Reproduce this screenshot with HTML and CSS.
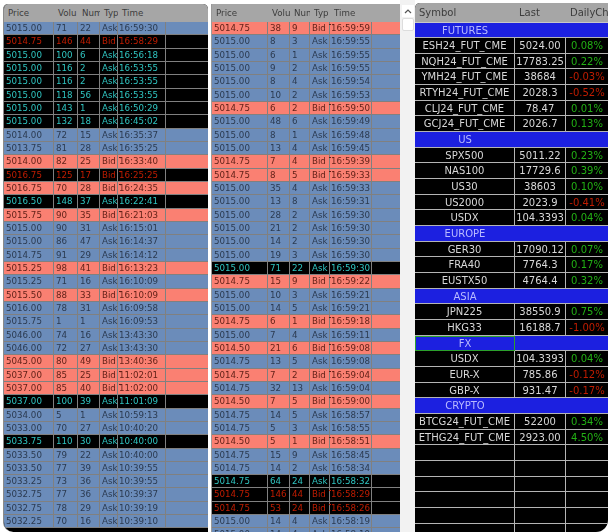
FILE: index.html
```html
<!DOCTYPE html>
<html lang="en">
<head>
    <meta charset="UTF-8">
    <meta name="viewport" content="width=device-width, initial-scale=1.0">
    <title>Time and Sales</title>
    <link rel="stylesheet" href="styles.css">
</head>
<body>
    <div class="desk">
        <div class="tape tape-left" id="tapeLeft">
            <div class="tape-head"><span>Price</span><span>Volu</span><span>Num</span><span>Typ</span><span>Time</span><span></span></div>
        </div>
        <div class="tape tape-mid" id="tapeMid">
            <div class="tape-head"><span>Price</span><span>Volu</span><span>Num</span><span>Typ</span><span>Time</span><span></span></div>
        </div>
        <div class="scrollbar">
            <div class="scroll-btn">
                <svg width="8" height="5" viewBox="0 0 8 5"><path d="M1 4 L4 1 L7 4" fill="none" stroke="#555" stroke-width="1.2"/></svg>
            </div>
            <div class="scroll-thumb"></div>
        </div>
        <div class="quotes" id="quotes">
            <div class="quotes-head"><span>Symbol</span><span>Last</span><span>DailyCh</span></div>
        </div>
    </div>
    <script>
        // k = ask, b = bid, K / B = the black highlighted prints
        const leftRows = [
            "5015.00 71 22 k 16:59:30", "5014.75 146 44 B 16:58:29", "5015.00 100 6 K 16:56:18",
            "5015.00 116 2 K 16:53:55", "5015.00 116 2 K 16:53:55", "5015.00 118 56 K 16:53:55",
            "5015.00 143 1 K 16:50:29", "5015.00 132 18 K 16:45:02", "5014.00 72 15 k 16:35:37",
            "5013.75 81 28 k 16:35:25", "5014.00 82 25 b 16:33:40", "5016.75 125 17 B 16:25:25",
            "5016.75 70 28 b 16:24:35", "5016.50 148 37 K 16:22:41", "5015.75 90 35 b 16:21:03",
            "5015.00 90 31 k 16:15:01", "5015.00 86 47 k 16:14:37", "5014.75 91 29 k 16:14:12",
            "5015.25 98 41 b 16:13:23", "5015.25 71 16 k 16:10:09", "5015.50 88 33 b 16:10:09",
            "5016.00 78 31 k 16:09:58", "5015.75 1 1 k 16:09:53", "5046.00 74 16 k 13:43:30",
            "5046.00 72 27 k 13:43:30", "5045.00 80 49 b 13:40:36", "5037.00 85 25 b 11:02:01",
            "5037.00 85 40 b 11:02:00", "5037.00 100 39 K 11:01:09", "5034.00 5 1 k 10:59:13",
            "5033.00 70 27 k 10:40:20", "5033.75 110 30 K 10:40:00", "5033.50 79 22 k 10:40:00",
            "5033.50 77 39 k 10:39:55", "5033.25 73 36 k 10:39:55", "5032.75 77 36 k 10:39:37",
            "5032.75 78 29 k 10:39:19", "5032.25 70 16 k 10:39:10"
        ];
        const midRows = [
            "5014.75 38 9 b 16:59:59", "5015.00 8 3 k 16:59:55", "5015.00 6 1 k 16:59:55",
            "5015.00 9 2 k 16:59:55", "5015.00 8 4 k 16:59:54", "5015.00 10 2 k 16:59:53",
            "5014.75 6 2 b 16:59:50", "5015.00 48 6 k 16:59:49", "5015.00 8 1 k 16:59:48",
            "5015.00 13 4 k 16:59:45", "5014.75 7 4 b 16:59:39", "5014.75 8 5 b 16:59:33",
            "5015.00 35 4 k 16:59:33", "5015.00 13 8 k 16:59:31", "5015.00 28 2 k 16:59:30",
            "5015.00 21 2 k 16:59:30", "5015.00 14 2 k 16:59:30", "5015.00 19 3 k 16:59:30",
            "5015.00 71 22 K 16:59:30", "5014.75 15 9 b 16:59:22", "5015.00 10 3 k 16:59:21",
            "5015.00 14 5 k 16:59:21", "5014.75 6 1 b 16:59:18", "5015.00 7 4 k 16:59:11",
            "5014.50 21 6 b 16:59:08", "5014.75 13 5 k 16:59:08", "5014.75 7 2 b 16:59:04",
            "5014.75 32 13 k 16:59:04", "5014.50 7 5 b 16:59:00", "5014.75 14 5 k 16:58:57",
            "5014.75 5 3 k 16:58:55", "5014.50 5 1 b 16:58:51", "5014.75 15 9 k 16:58:45",
            "5014.75 14 2 k 16:58:34", "5014.75 64 24 K 16:58:32", "5014.75 146 44 B 16:58:29",
            "5014.75 53 24 B 16:58:26", "5015.00 14 4 k 16:58:19", "5015.00 14 4 k 16:58:19"
        ];
        const rowClass = { k: "ask", b: "bid", K: "big-ask", B: "big-bid" };

        function fillTape(id, rows) {
            const tape = document.getElementById(id);
            rows.forEach(function (line) {
                const p = line.split(" ");
                const type = (p[3] === "k" || p[3] === "K") ? "Ask" : "Bid";
                tape.innerHTML += `<div class="print ${rowClass[p[3]]}"><span>${p[0]}</span><span>${p[1]}</span><span>${p[2]}</span><span class="type">${type}</span><span class="time">${p[4]}</span><span></span></div>`;
            });
        }
        fillTape("tapeLeft", leftRows);
        fillTape("tapeMid", midRows);

        const quoteRows = [
            ["FUTURES"],
            ["ESH24_FUT_CME", "5024.00", "0.08%"], ["NQH24_FUT_CME", "17783.25", "0.22%"],
            ["YMH24_FUT_CME", "38684", "-0.03%"], ["RTYH24_FUT_CME", "2028.3", "-0.52%"],
            ["CLJ24_FUT_CME", "78.47", "0.01%"], ["GCJ24_FUT_CME", "2026.7", "0.13%"],
            ["US"],
            ["SPX500", "5011.22", "0.23%"], ["NAS100", "17729.6", "0.39%"], ["US30", "38603", "0.10%"],
            ["US2000", "2023.9", "-0.41%"], ["USDX", "104.3393", "0.04%"],
            ["EUROPE"],
            ["GER30", "17090.12", "0.07%"], ["FRA40", "7764.3", "0.17%"], ["EUSTX50", "4764.4", "0.32%"],
            ["ASIA"],
            ["JPN225", "38550.9", "0.75%"], ["HKG33", "16188.7", "-1.00%"],
            ["FX"],
            ["USDX", "104.3393", "0.04%"], ["EUR-X", "785.86", "-0.12%"], ["GBP-X", "931.47", "-0.17%"],
            ["CRYPTO"],
            ["BTCG24_FUT_CME", "52200", "0.34%"], ["ETHG24_FUT_CME", "2923.00", "4.50%"],
            ["", "", ""], ["", "", ""], ["", "", ""], ["", "", ""], ["", "", ""], ["", "", ""]
        ];
        const quotes = document.getElementById("quotes");
        quoteRows.forEach(function (q) {
            if (q.length === 1) {
                const sel = q[0] === "FX" ? " selected" : "";
                quotes.innerHTML += `<div class="group"><span class="group-name${sel}">${q[0]}</span><span></span></div>`;
            } else {
                const dir = q[2].charAt(0) === "-" ? "down" : "up";
                quotes.innerHTML += `<div class="quote"><span>${q[0]}</span><span>${q[1]}</span><span class="${dir}">${q[2]}</span></div>`;
            }
        });
    </script>
</body>
</html>
```

FILE: styles.css
```css
html, body {
    margin: 0;
    padding: 0;
    height: 532px;
    overflow: hidden;
    background: #fff;
}
body {
    font-family: "DejaVu Sans", sans-serif;
    font-size: 8.7px;
}
.desk {
    display: flex;
    height: 532px;
    overflow: hidden;
    filter: blur(0.4px);
}
.tape {
    height: 528px;
    margin-top: 4px;
    overflow: hidden;
    flex: none;
    background: #000;
}
.tape-left {
    width: 204px;
    margin-left: 3px;
    border-left: 1px solid #8a8a8a;
    border-radius: 5px 5px 0 10px;
}
.tape-mid {
    width: 188px;
    margin-left: 3px;
    border-left: 1px solid #9a9a9a;
}
.tape-head, .print {
    display: grid;
    align-items: center;
    white-space: nowrap;
}
.tape-left .tape-head, .tape-left .print {
    grid-template-columns: 50px 24px 22px 18px 48px 1fr;
}
.tape-mid .tape-head, .tape-mid .print {
    grid-template-columns: 56px 22px 20px 20px 42px 1fr;
}
.tape-head {
    height: 18px;
    background: #a6a6a6;
    color: #3c3c3c;
}
.tape-head span {
    padding-left: 4px;
    overflow: hidden;
}
.print {
    height: 13.33px;
    box-sizing: border-box;
    border-bottom: 1px solid #808080;
}
.print span {
    height: 100%;
    line-height: 13px;
    padding-left: 2px;
    box-sizing: border-box;
    border-right: 1px solid #808080;
}
.print span:last-child {
    border-right: none;
}
.print .time {
    padding-left: 1px;
}
/* the clipped start of the next word in the Type column, bid rows only */
.bid .type::after, .big-bid .type::after {
    content: "";
    display: inline-block;
    width: 2px;
    height: 1px;
    margin-left: 3px;
    vertical-align: 6px;
    background: currentColor;
}
.ask {
    background: #6b8cba;
    color: #2b3a50;
}
.bid {
    background: #fa8072;
    color: #5f1f16;
}
.big-ask {
    background: #000;
    color: #2fc4c0;
}
.big-bid {
    background: #000;
    color: #c01c00;
}
.scrollbar {
    flex: none;
    width: 15px;
    height: 532px;
    background: #f2f2f2;
    display: flex;
    flex-direction: column;
    align-items: center;
    gap: 1px;
    padding-top: 5px;
    box-sizing: border-box;
}
.scroll-btn {
    width: 12px;
    height: 12px;
    background: #fff;
    display: flex;
    align-items: center;
    justify-content: center;
}
.scroll-thumb {
    width: 12px;
    height: 13px;
    background: #fff;
    border: 1px solid #ddd;
    box-sizing: border-box;
    border-radius: 2px;
}
.quotes {
    flex: none;
    width: 193px;
    height: 529px;
    margin-top: 3px;
    overflow: hidden;
    background: #000;
    border-radius: 5px 0 12px 0;
    font-size: 10px;
}
.quotes-head, .quote, .group {
    display: grid;
    grid-template-columns: 100px 51px 1fr;
}
.quotes-head {
    height: 19.5px;
    background: #a6a6a6;
    color: #3c3c3c;
    align-items: center;
    border-bottom: 1px solid #c8c8c8;
    box-sizing: border-box;
}
.quotes-head span {
    padding-left: 4px;
    overflow: hidden;
    white-space: nowrap;
}
.quotes-head span:nth-child(2) {
    padding-left: 4px;
}
.quote {
    height: 15.67px;
    box-sizing: border-box;
    border-bottom: 1px solid #b4b4b4;
    color: #d8d8d8;
    text-align: center;
    white-space: nowrap;
}
.quote span {
    line-height: 15px;
    height: 100%;
    box-sizing: border-box;
    border-right: 1px solid #b4b4b4;
}
.quote span:last-child {
    border-right: none;
}
.quote .up {
    color: #22b014;
}
.quote .down {
    color: #c01c00;
}
.group {
    height: 15.67px;
    box-sizing: border-box;
    background: #1c20e0;
    color: #b8baff;
    border-bottom: 1px solid #b4b4b4;
    grid-template-columns: 100px 1fr;
    text-align: center;
}
.group-name {
    line-height: 15px;
    box-sizing: border-box;
    height: 100%;
}
.group-name.selected {
    border-right: 1px solid #2ca02c;
    border-bottom: 1px solid #2ca02c;
    border-left: 1px solid #2ca02c;
    border-top: 1px solid #2ca02c;
    line-height: 13px;
}
```
